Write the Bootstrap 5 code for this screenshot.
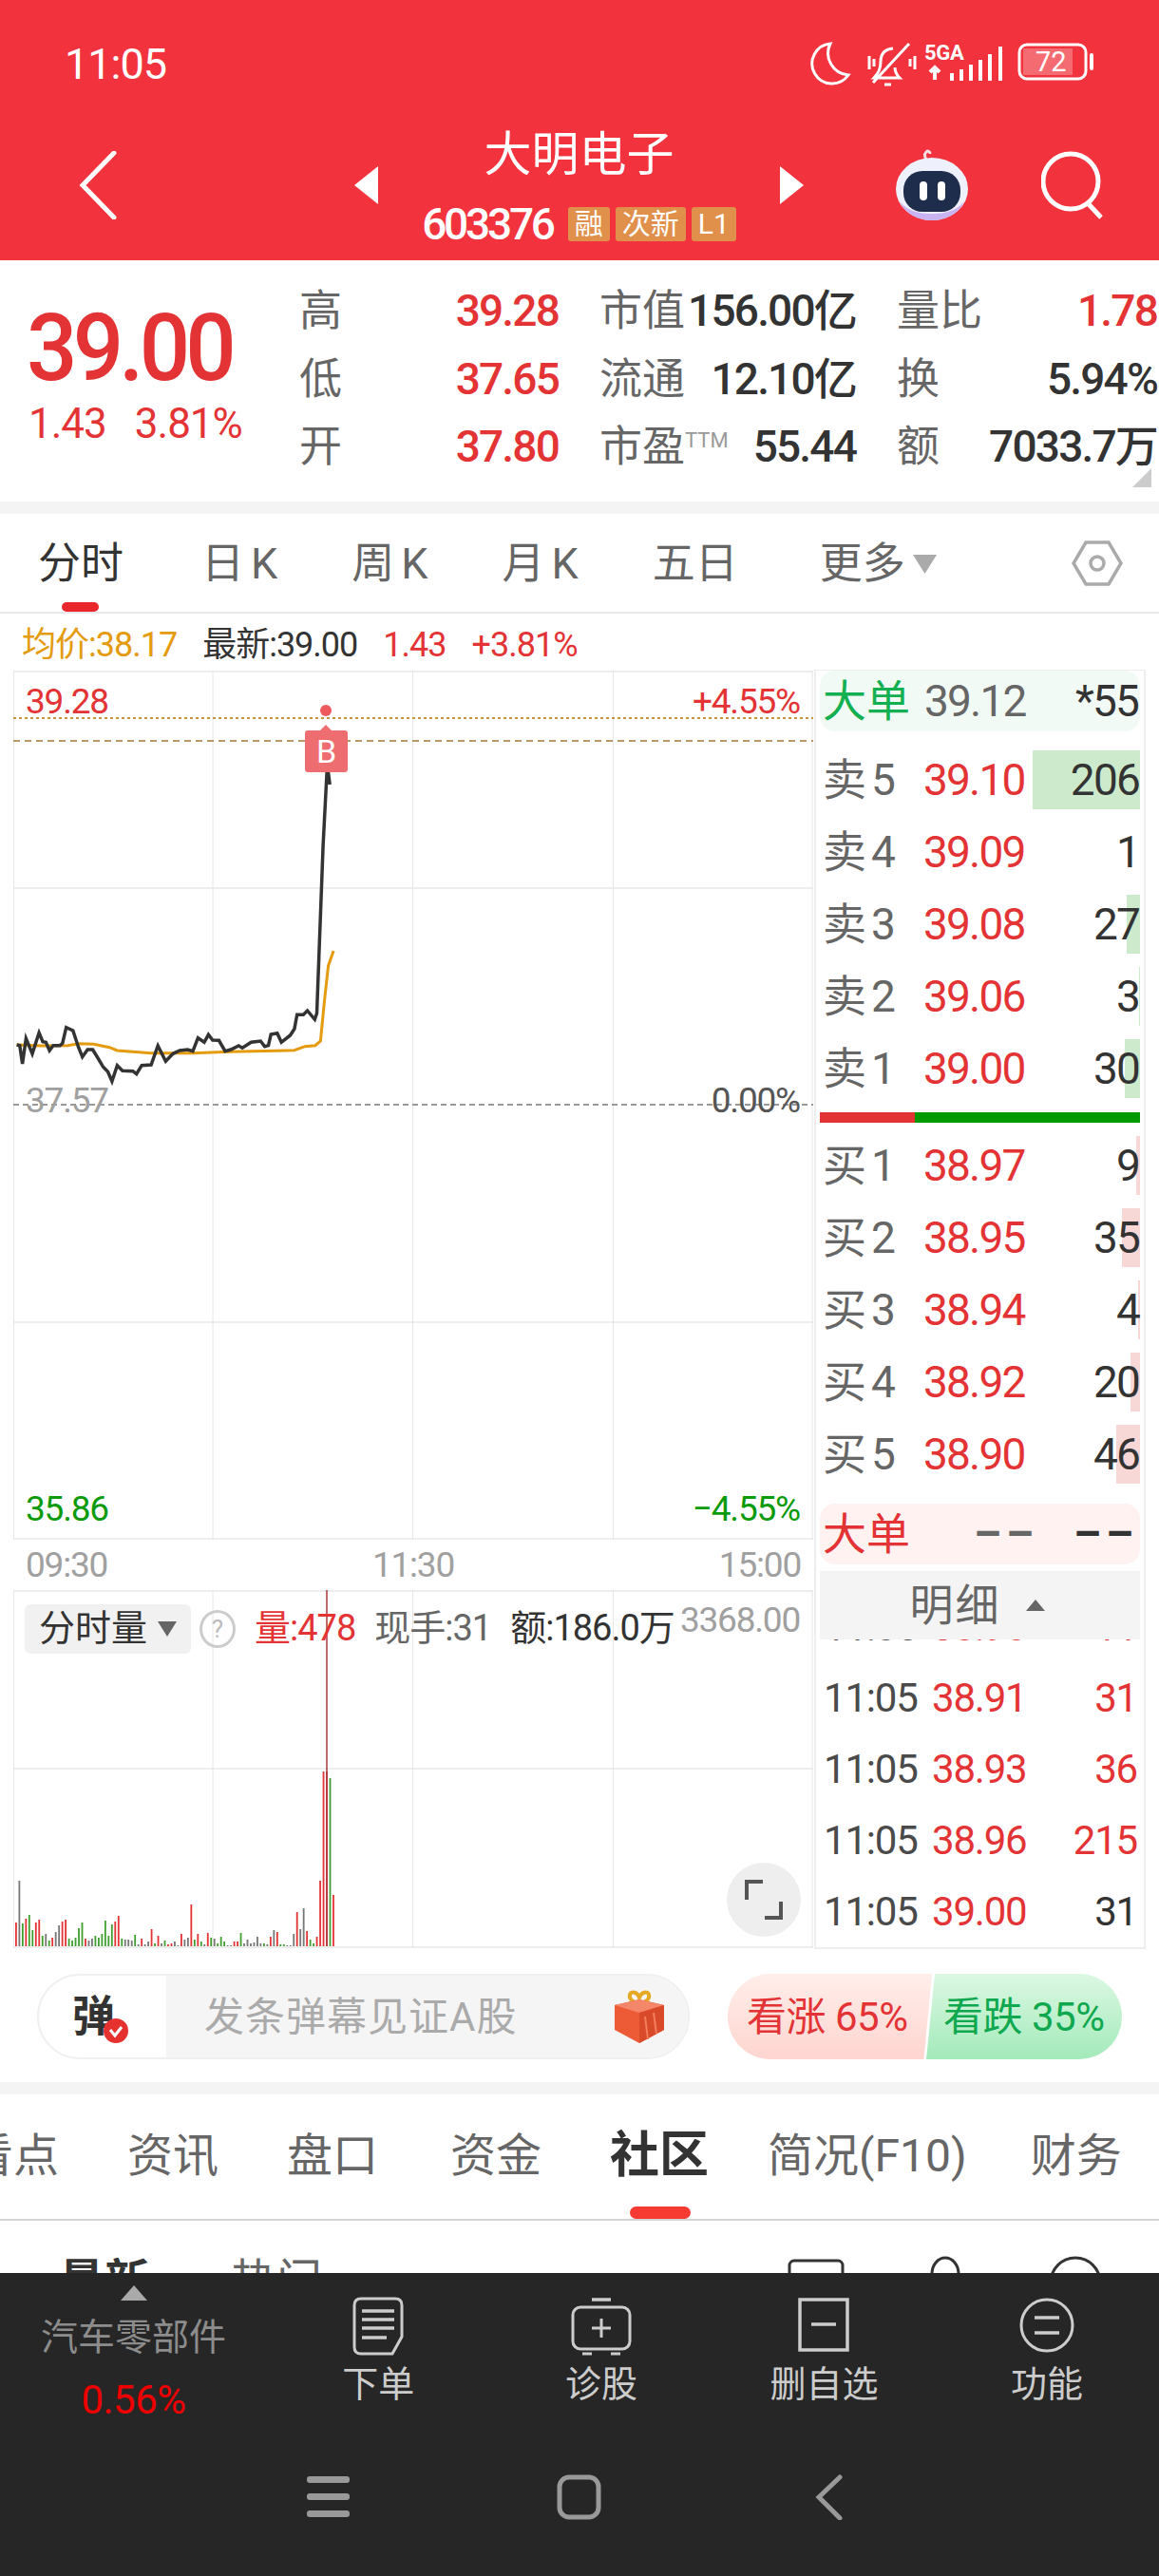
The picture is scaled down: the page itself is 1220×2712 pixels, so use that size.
<!DOCTYPE html>
<html lang="zh-CN">
<head>
    <meta charset="UTF-8">
    <meta name="viewport" content="width=device-width, initial-scale=1.0">
    <title>大明电子 603376</title>
    <link href="https://cdn.jsdelivr.net/npm/bootstrap@5.3.0/dist/css/bootstrap.min.css" rel="stylesheet">
    <style>
        body { margin: 0; background: #fff; font-family: Roboto, "Noto Sans CJK SC", sans-serif; color: #333; }
        .screen { width: 1220px; height: 2712px; overflow: hidden; }
        .up { color: #e33335; }
        .down { color: #0a9a0a; }
        .muted-txt { color: #666; }
        .grey-gap { height: 13px; background: #f4f4f4; }

        /* header */
        .top-red { height: 274px; background: #f2323c; color: #fff; }
        .status-line { height: 130px; padding: 6px 68px 0 68px; }
        .clock { font-size: 45px; letter-spacing: -1px; }
        .nav-line { height: 140px; padding-bottom: 10px; }
        .back-slot { width: 373px; padding-left: 83px; }
        .stock-head { width: 423px; text-align: center; padding-bottom: 9px; }
        .stock-name { font-size: 50px; line-height: 60px; font-family: "Noto Sans CJK SC", sans-serif; }
        .stock-code { font-size: 46px; line-height: 36px; margin-top: 30px; letter-spacing: -3.2px; font-weight: 500; }
        .tag-group { gap: 6px; margin-left: 16px; }
        .tagchip { background: #e0904a; border-radius: 3px; font-size: 30px; font-weight: 400; line-height: 36px; height: 36px; padding: 0 7px; letter-spacing: 0; }

        /* quote block */
        .quote-box { height: 254px; }
        .price-col { width: 315px; padding: 49px 0 0 28px; }
        .big-price { font-size: 98px; line-height: 88px; font-weight: 500; letter-spacing: -5px; width: 240px; transform: scaleX(.96); transform-origin: left center; }
        .price-diff { font-size: 44px; line-height: 50px; margin-top: 10px; margin-left: 2px; letter-spacing: -1px; gap: 30px; }
        .stat-grid { padding-top: 18px; display: grid; grid-template-columns: 273px 270px 274px; column-gap: 43px; grid-auto-rows: 71.5px; width: 905px; }
        .stat-cell { display: flex; justify-content: space-between; align-items: center; font-size: 46px; letter-spacing: -1.8px; font-weight: 500; white-space: nowrap; }
        .stat-cell > span:first-child { color: #666; font-weight: 400; letter-spacing: 0; font-size: 45px; }
        .stat-cell sup { font-size: 22px; color: #999; top: -.7em; letter-spacing: 0; }
        .corner-mark { right: 8px; bottom: 15px; width: 20px; height: 20px; background: #ccc; clip-path: polygon(100% 0, 100% 100%, 0 100%); }

        /* period tabs */
        .period-tabs { height: 105px; padding: 2px 0 0 40px; border-bottom: 2px solid #e8e8e8; font-size: 45px; color: #666; gap: 78px; }
        .period-tabs .on { color: #333; }
        .period-bar { left: 65px; bottom: 0; width: 39px; height: 10px; background: #e9262c; border-radius: 5px; }
        .k-letter { margin-left: 7px; }
        .hex-slot { right: 38px; top: 27px; }
        .tick-line { height: 59px; padding: 6px 0 0 23px; font-size: 36px; letter-spacing: -1px; gap: 27px; }
        .avg-txt { color: #e49b0f; }

        /* chart + order book */
        .market { height: 1347px; }
        .left-col { width: 857px; padding-left: 14px; }
        .price-chart { width: 842px; height: 915px; margin-top: 1px; }
        .vol-chart { width: 842px; height: 377px; }
        .chart-label { font-size: 37px; line-height: 40px; letter-spacing: -1.2px; white-space: nowrap; }
        .time-axis { height: 53px; padding: 0 14px 0 13px; font-size: 37px; color: #a0a0a0; letter-spacing: -1.2px; }
        .b-tag { left: 307px; top: 63px; width: 45px; height: 44px; background: #ee6d70; border-radius: 3px; color: #fff; font-size: 34px; line-height: 44px; text-align: center; letter-spacing: 0; }
        .b-tag::before { content: ""; position: absolute; left: 15px; top: -6px; width: 14px; height: 7px; background: #ee6d70; clip-path: polygon(50% 0, 100% 100%, 0 100%); }
        .vol-head { left: 12px; top: 12px; font-size: 38px; letter-spacing: -1px; white-space: nowrap; gap: 20px; }
        .vol-chip { width: 175px; height: 52px; background: #f1f1f1; border-radius: 6px; padding-left: 15px; letter-spacing: 0; font-size: 38px; margin-right: -11px; }
        .tri-down { width: 0; height: 0; border-left: 10px solid transparent; border-right: 10px solid transparent; border-top: 16px solid #666; margin-left: 11px; }
        .help-ring { width: 38px; height: 40px; border: 3px solid #ccc; border-radius: 50%; color: #bbb; font-size: 26px; line-height: 34px; text-align: center; letter-spacing: 0; }
        .expand-btn { right: 13px; bottom: 12px; width: 78px; height: 78px; background: #eee; border-radius: 50%; }

        .book { width: 349px; margin-right: 14px; border: 2px solid #eee; border-top-width: 1px; padding: 0 4px; height: 1347px; font-size: 46px; letter-spacing: -1.8px; }
        .big-order { height: 64px; border-radius: 16px; padding: 0 2px 0 3px; }
        .big-order.buy-side { background: #f2faf5; margin-bottom: 13px; }
        .big-order.sell-side { background: #fff2f1; margin-top: 14px; }
        .big-name { width: 107px; font-size: 46px; letter-spacing: 0; }
        .depth-row { height: 76px; padding: 0 1px 0 3px; }
        .depth-name { width: 106px; color: #666; letter-spacing: 0; }
        .depth-name small { font-size: 46px; margin-left: 5px; }
        .depth-bar { right: 0; top: 7px; height: 62px; }
        .split-bar { height: 11px; margin: 8px 0 7px; background: #009a00; }
        .split-bar div { width: 100px; height: 100%; background: #e33335; }
        .dash-pair { letter-spacing: 5px; font-weight: 700; }
        .detail-head { height: 72px; margin-top: 7px; background: #f4f4f4; color: #666; gap: 26px; padding-right: 6px; letter-spacing: 2px; }
        .tri-up { width: 0; height: 0; border-left: 10px solid transparent; border-right: 10px solid transparent; border-bottom: 12px solid #666; }
        .trade-box { height: 325px; overflow: hidden; }
        .trade-list { margin-top: -51px; }
        .trade-row { height: 75px; padding: 0 3px 0 4px; font-size: 42px; letter-spacing: -1.2px; }
        .trade-time { width: 114px; color: #4a4a4a; }

        /* danmu */
        .danmu-row { height: 140px; padding: 26px 39px 0 39px; gap: 40px; }
        .danmu-pill { width: 687px; height: 90px; border: 2px solid #f0f0f0; border-radius: 45px; overflow: hidden; }
        .danmu-left { width: 134px; padding-left: 35px; font-size: 45px; font-weight: 700; line-height: 1; color: #333; }
        .danmu-input { background: #f5f5f5; color: #aaa; font-size: 42px; letter-spacing: 1px; padding: 0 24px 0 40px; }
        .vote-up, .vote-down { height: 90px; width: 215px; font-size: 42px; letter-spacing: -.5px; white-space: nowrap; }
        .vote-up { background: linear-gradient(#ffeeea, #ffd5d0); border-radius: 45px 0 0 45px; clip-path: polygon(0 0, 100% 0, 96% 100%, 0 100%); padding-left: 20px; }
        .vote-down { background: linear-gradient(#dcf8e3, #a3eaba); border-radius: 0 45px 45px 0; margin-left: -15px; color: #0fa84f; clip-path: polygon(8.4% 0, 100% 0, 100% 100%, 4.2% 100%); padding-left: 27px; }

        /* lower tabs */
        .lower-tabs { height: 131px; padding: 0 0 2px 0; margin-left: -34px; width: 1270px; font-size: 48px; color: #666; gap: 72px; white-space: nowrap; }
        .lower-tabs .on { color: #333; font-size: 52px; font-weight: 700; position: relative; margin-right: -10px; }
        .lower-tabs .on::after { content: ""; position: absolute; left: 21px; right: 19px; bottom: -27px; height: 13px; background: #f73a32; border-radius: 7px; }
        .lower-tabs .tight-next { margin-right: -5px; }
        .lower-line { height: 2px; background: #d6d6d6; }
        .feed-head { height: 55px; overflow: hidden; font-size: 48px; line-height: 48px; padding: 40px 0 0 62px; color: #666; }
        .feed-head b { color: #333; margin-right: 85px; }
        .feed-icons { left: 825px; top: 0; }

        /* dark footer */
        .dark-foot { height: 319px; background: #262626; }
        .tool-line { height: 200px; }
        .sector-col { width: 281px; padding-top: 13px; font-size: 39px; color: #8c8c8c; line-height: 1; }
        .tri-sector { width: 0; height: 0; margin: 0 auto; border-left: 14px solid transparent; border-right: 14px solid transparent; border-bottom: 16px solid #aaa; }
        .sector-name { margin-top: 20px; }
        .sector-pct { margin-top: 25px; color: #e00; font-size: 42px; letter-spacing: -.5px; }
        .tool-item { width: 234.6px; padding-top: 25px; color: #ccc; font-size: 38px; line-height: 1; }
        .tool-item svg { display: block; margin: 0 auto 11px; height: 62px; }
        .sys-nav { padding-top: 12px; }
    </style>
</head>
<body>
<div class="screen position-relative">

    <!-- шапка -->
    <header class="top-red">
        <div class="status-line d-flex justify-content-between align-items-center">
            <span class="clock">11:05</span>
            <svg width="300" height="50" viewBox="0 0 300 50" fill="none" stroke="#fff" stroke-width="3">
                <path d="M22 3A21 21 0 1 0 41 36A23 23 0 0 1 22 3Z"/>
                <path d="M88 8c-10 1-13 7-13 14c0 9-4 14-7 17h27c-3-3-5-6-5-11M67 44L105 3M79 46h7M63 16v14M111 16v14M106 19v8M68 19v8"/>
                <text x="121" y="20" fill="#fff" stroke="none" font-family="Roboto" font-weight="700" font-size="22" letter-spacing="-.3">5GA</text>
                <path d="M132 30v11M137 33l-5-5-5 5M150 42v-8M160 42v-12M170 42v-17M180 42v-22M190 42v-28M201 42v-36" stroke-width="4"/>
                <rect x="221" y="4" width="70" height="36" rx="8"/>
                <path d="M225 8h52v28h-52z" fill="#fff" fill-opacity=".28" stroke="none"/>
                <text x="238" y="32" fill="#fff" stroke="none" font-family="Roboto" font-size="29">72</text>
                <path d="M297 15v14" stroke-width="4" stroke-linecap="round"/>
            </svg>
        </div>
        <div class="nav-line d-flex align-items-center">
            <div class="back-slot">
                <svg class="d-block" width="40" height="72" viewBox="0 0 40 72" fill="none" stroke="#fff" stroke-width="5"><path d="M37 2L4 36L37 70" stroke-linecap="round"/></svg>
            </div>
            <svg width="25" height="40" viewBox="0 0 25 40" fill="#fff"><path d="M25 0V40L0 20Z"/></svg>
            <div class="stock-head">
                <div class="stock-name">大明电子</div>
                <div class="stock-code d-flex justify-content-center align-items-center">
                    <span>603376</span>
                    <span class="tag-group d-flex">
                        <span class="tagchip">融</span><span class="tagchip">次新</span><span class="tagchip">L1</span>
                    </span>
                </div>
            </div>
            <svg width="25" height="40" viewBox="0 0 25 40" fill="#fff"><path d="M0 0V40L25 20Z"/></svg>
            <svg class="ms-auto" width="78" height="78" viewBox="0 0 78 78">
                <path d="M34 14c-2-4-4-7-1-10c2-2 4 0 4 2" fill="none" stroke="#f6dfe2" stroke-width="3"/>
                <ellipse cx="39" cy="43" rx="38" ry="33" fill="#eef0fb"/>
                <path d="M5 56c6 14 20 20 34 20s28-6 34-20c-8 10-20 13-34 13s-26-3-34-13z" fill="#c9b3f0"/>
                <rect x="9" y="24" width="60" height="43" rx="20" fill="#1f2d4d"/>
                <rect x="26" y="35" width="8" height="20" rx="4" fill="#fff"/>
                <rect x="45" y="35" width="8" height="20" rx="4" fill="#fff"/>
            </svg>
            <svg style="margin:0 58px 0 76px" width="66" height="72" viewBox="0 0 66 72" fill="none" stroke="#fff" stroke-width="5"><ellipse cx="31" cy="32" rx="29" ry="29"/><path d="M50 56L63 70"/></svg>
        </div>
    </header>

    <!-- котировка -->
    <section class="quote-box d-flex position-relative">
        <div class="price-col up">
            <div class="big-price">39.00</div>
            <div class="price-diff d-flex"><span>1.43</span><span>3.81%</span></div>
        </div>
        <div class="stat-grid">
            <div class="stat-cell"><span>高</span><span class="up">39.28</span></div>
            <div class="stat-cell"><span>市值</span><span>156.00亿</span></div>
            <div class="stat-cell"><span>量比</span><span class="up">1.78</span></div>
            <div class="stat-cell"><span>低</span><span class="up">37.65</span></div>
            <div class="stat-cell"><span>流通</span><span>12.10亿</span></div>
            <div class="stat-cell"><span>换</span><span>5.94%</span></div>
            <div class="stat-cell"><span>开</span><span class="up">37.80</span></div>
            <div class="stat-cell"><span>市盈<sup>TTM</sup></span><span>55.44</span></div>
            <div class="stat-cell"><span>额</span><span>7033.7万</span></div>
        </div>
        <div class="corner-mark position-absolute"></div>
    </section>
    <div class="grey-gap"></div>

    <!-- периоды -->
    <nav class="period-tabs d-flex align-items-center position-relative">
        <span class="on">分时</span>
        <span class="ms-1">日<span class="k-letter">K</span></span>
        <span>周<span class="k-letter">K</span></span>
        <span>月<span class="k-letter">K</span></span>
        <span>五日</span>
        <span class="d-flex align-items-center ms-2">更多
            <svg class="ms-2" width="25" height="20" viewBox="0 0 25 20" fill="#aaa"><path d="M0 0H25L12.500 20Z"/></svg>
        </span>
        <svg class="hex-slot position-absolute" width="54" height="50" viewBox="0 0 54 50" fill="none" stroke="#aaa" stroke-width="3.5"><path d="M15 3H39L52 25L39 47H15L2 25Z"/><circle cx="27" cy="25" r="7"/></svg>
        <div class="period-bar position-absolute"></div>
    </nav>
    <div class="tick-line d-flex align-items-center">
        <span class="avg-txt">均价:38.17</span>
        <span>最新:39.00</span>
        <span class="up">1.43</span>
        <span class="up">+3.81%</span>
    </div>

    <div class="market d-flex">
        <div class="left-col">
            <!-- график цены -->
            <div class="price-chart position-relative">
                <svg id="priceSvg" class="d-block" width="842" height="915" viewBox="0 0 842 915" fill="none">
                    <path d="M0 1H842M0 229H842M0 686H842M0 914H842" stroke="#eee" stroke-width="2"/>
                    <path d="M.5 0V915M210 0V915M420.5 0V915M631.500 0V915M841 0V915" stroke="#e6e6e6"/>
                    <path d="M0 50H842" stroke="#c9933f" stroke-width="2" stroke-dasharray="3 3"/>
                    <path d="M0 74H842" stroke="#b89a68" stroke-width="2" stroke-dasharray="7 5"/>
                    <path d="M0 457H842" stroke="#999" stroke-width="2" stroke-dasharray="6 4"/>
                    <circle cx="329" cy="42" r="6" fill="#ee5a5e"/>
                </svg>
                <div class="chart-label up position-absolute" style="left:13px;top:13px">39.28</div>
                <div class="chart-label up position-absolute" style="right:14px;top:13px">+4.55%</div>
                <div class="chart-label position-absolute" style="left:13px;top:433px;color:#a0a0a0">37.57</div>
                <div class="chart-label position-absolute" style="right:14px;top:433px;color:#555">0.00%</div>
                <div class="chart-label down position-absolute" style="left:13px;top:863px">35.86</div>
                <div class="chart-label down position-absolute" style="right:14px;top:863px">−4.55%</div>
                <div class="b-tag position-absolute">B</div>
            </div>
            <div class="time-axis d-flex justify-content-between align-items-center"><span>09:30</span><span>11:30</span><span>15:00</span></div>

            <!-- объём -->
            <div class="vol-chart position-relative">
                <svg id="volSvg" class="d-block" width="842" height="377" viewBox="0 0 842 377" fill="none">
                    <path d="M0 1H842M0 188H842M0 376H842" stroke="#eee" stroke-width="2"/>
                    <path d="M.5 0V377M210 0V377M420.5 0V377M631.500 0V377M841 0V377" stroke="#e6e6e6"/>
                </svg>
                <div class="vol-head position-absolute d-flex align-items-center">
                    <div class="vol-chip d-flex align-items-center">分时量<span class="tri-down"></span></div>
                    <div class="help-ring">?</div>
                    <span class="up">量:478</span>
                    <span class="muted-txt">现手:31</span>
                    <span>额:186.0万</span>
                </div>
                <div class="chart-label position-absolute" style="right:14px;top:12px;color:#a0a0a0">3368.00</div>
                <div class="expand-btn position-absolute d-flex align-items-center justify-content-center">
                    <svg width="42" height="44" viewBox="0 0 42 44" fill="none" stroke="#555" stroke-width="4"><path d="M20 3H3V22M22 41H39V24"/></svg>
                </div>
            </div>
        </div>

        <!-- стакан -->
        <aside class="book">
            <div class="big-order buy-side d-flex align-items-center">
                <span class="big-name" style="color:#12b050">大单</span>
                <span class="muted-txt">39.12</span>
                <span class="ms-auto">*55</span>
            </div>
            <div id="askRows"></div>
            <div class="split-bar"><div></div></div>
            <div id="bidRows"></div>
            <div class="big-order sell-side d-flex align-items-center">
                <span class="big-name up">大单</span>
                <span class="muted-txt dash-pair" style="margin-left:52px">––</span>
                <span class="ms-auto dash-pair">––</span>
            </div>
            <div class="detail-head d-flex align-items-center justify-content-center"><span>明细</span><span class="tri-up"></span></div>
            <div class="trade-box"><div id="tradeRows" class="trade-list"></div></div>
        </aside>
    </div>

    <!-- бегущие комментарии -->
    <div class="danmu-row d-flex">
        <div class="danmu-pill d-flex">
            <div class="danmu-left d-flex align-items-center position-relative">弹
                <svg class="position-absolute" style="left:67px;top:44px" width="28" height="28" viewBox="0 0 28 28"><circle cx="14" cy="14" r="13" fill="#e5322f"/><path d="M8 13l5 6l7-9" fill="none" stroke="#fff" stroke-width="3"/></svg>
            </div>
            <div class="danmu-input flex-grow-1 d-flex align-items-center justify-content-between">
                <span>发条弹幕见证A股</span>
                <svg width="54" height="56" viewBox="0 0 54 56">
                    <path d="M27 14c-8-1-11-5-10-9c1-4 8-3 10 3c2-6 9-7 10-3c1 4-2 8-10 9z" fill="none" stroke="#e5a923" stroke-width="4"/>
                    <path d="M1 16L27 10L53 16V42L27 56L1 42Z" fill="#ec5a36"/>
                    <path d="M1 16L27 10L53 16L27 24Z" fill="#f4866a"/>
                    <path d="M27 24V56L53 42V16Z" fill="#d94a2a"/>
                    <path d="M33 28l3 24M42 24l3 22" stroke="#f47d5c" stroke-width="2"/>
                </svg>
            </div>
        </div>
        <div class="d-flex">
            <div class="vote-up up d-flex align-items-center">看涨 65%</div>
            <div class="vote-down d-flex align-items-center">看跌 35%</div>
        </div>
    </div>
    <div class="grey-gap"></div>

    <!-- нижние вкладки -->
    <div class="overflow-hidden">
        <div class="lower-tabs d-flex align-items-center">
            <span>看点</span><span>资讯</span><span>盘口</span><span class="ms-1">资金</span><span class="on">社区</span><span class="tight-next">简况(F10)</span><span>财务</span>
        </div>
    </div>
    <div class="lower-line"></div>
    <div class="feed-head position-relative">
        <b>最新</b><span>热门</span>
        <svg class="feed-icons position-absolute" width="340" height="55" viewBox="0 0 340 55" fill="none" stroke="#333" stroke-width="3">
            <rect x="6" y="42" width="56" height="40" rx="5"/>
            <ellipse cx="170" cy="56" rx="14" ry="17"/>
            <circle cx="307" cy="65" r="26"/>
        </svg>
    </div>

    <!-- тёмный подвал -->
    <footer class="dark-foot">
        <div class="tool-line d-flex text-center">
            <div class="sector-col">
                <div class="tri-sector"></div>
                <div class="sector-name">汽车零部件</div>
                <div class="sector-pct">0.56%</div>
            </div>
            <div class="tool-item">
                <svg width="54" height="62" viewBox="0 0 54 62" fill="none" stroke="#ccc" stroke-width="3"><path d="M9 2H45Q52 2 52 9V42L42 60H9Q2 60 2 53V9Q2 2 9 2Z"/><path d="M10 15H44M10 24H44M10 33H44M10 43H36" stroke-width="3.500"/></svg>
                下单
            </div>
            <div class="tool-item">
                <svg width="64" height="62" viewBox="0 0 64 62" fill="none" stroke="#ccc" stroke-width="3"><path d="M22 3H42" stroke-width="3.500"/><rect x="2" y="11" width="60" height="44" rx="8"/><path d="M32 23V43M22 33H42M12 60H22M42 60H52"/></svg>
                诊股
            </div>
            <div class="tool-item">
                <svg width="54" height="62" viewBox="0 0 54 62" fill="none" stroke="#ccc" stroke-width="3.500"><rect x="2" y="3" width="50" height="53"/><path d="M14 29H40"/></svg>
                删自选
            </div>
            <div class="tool-item">
                <svg width="58" height="62" viewBox="0 0 58 62" fill="none" stroke="#ccc" stroke-width="3"><circle cx="29" cy="30" r="27"/><path d="M16 22H42M16 38H42" stroke-width="3.500"/></svg>
                功能
            </div>
        </div>
        <div class="sys-nav d-flex">
            <svg style="margin-left:323px" width="45" height="48" viewBox="0 0 45 48" fill="#999"><rect y="2" width="45" height="7" rx="3"/><rect y="20" width="45" height="7" rx="3"/><rect y="38" width="45" height="7" rx="3"/></svg>
            <svg style="margin-left:218px" width="47" height="48" viewBox="0 0 47 48" fill="none" stroke="#999" stroke-width="5"><rect x="3" y="3" width="41" height="42" rx="10"/></svg>
            <svg style="margin-left:224px" width="30" height="48" viewBox="0 0 30 48" fill="none" stroke="#999" stroke-width="5" stroke-linecap="round"><path d="M27 3L5 24L27 46"/></svg>
        </div>
    </footer>
</div>

<script src="https://cdn.jsdelivr.net/npm/bootstrap@5.3.0/dist/js/bootstrap.bundle.min.js"></script>
<script>
    // стакан
    const asks = [[5, '39.10', 206, 113], [4, '39.09', 1, 0], [3, '39.08', 27, 14], [2, '39.06', 3, 1.5], [1, '39.00', 30, 16]];
    const bids = [[1, '38.97', 9, 4], [2, '38.95', 35, 19], [3, '38.94', 4, 2], [4, '38.92', 20, 10], [5, '38.90', 46, 25]];
    function depthRow(name, r, color) {
        return `<div class="depth-row d-flex align-items-center position-relative">
            <div class="depth-bar position-absolute" style="width:${r[3]}px;background:${color}"></div>
            <span class="depth-name position-relative">${name}<small>${r[0]}</small></span>
            <span class="up position-relative">${r[1]}</span>
            <span class="ms-auto position-relative">${r[2]}</span></div>`;
    }
    document.getElementById('askRows').innerHTML = asks.map(r => depthRow('卖', r, '#cdeacd')).join('');
    document.getElementById('bidRows').innerHTML = bids.map(r => depthRow('买', r, '#f8d7d7')).join('');

    // сделки
    const trades = [['38.90', '11', 1], ['38.91', '31', 1], ['38.93', '36', 1], ['38.96', '215', 1], ['39.00', '31', 0]];
    document.getElementById('tradeRows').innerHTML = trades.map(t =>
        `<div class="trade-row d-flex align-items-center"><span class="trade-time">11:05</span><span class="up">${t[0]}</span><span class="ms-auto ${t[2] ? 'up' : ''}">${t[1]}</span></div>`
    ).join('');

    // линии графика, снято с кадра: x делим на 1.823, y на 3
    const NS = 'http://www.w3.org/2000/svg';
    const last = [32,1230,38,1232,43,1290,50,1210,62,1258,75,1192,82,1220,88,1222,95,1248,102,1232,115,1232,120,1225,127,1175,140,1185,150,1235,158,1268,168,1245,178,1245,188,1272,198,1300,207,1315,215,1345,225,1295,235,1312,255,1313,262,1322,272,1295,290,1293,303,1233,318,1282,332,1258,345,1248,360,1245,370,1250,380,1208,392,1222,400,1198,408,1215,420,1216,432,1250,443,1245,458,1233,465,1240,482,1222,500,1218,508,1235,515,1232,520,1197,532,1193,540,1222,557,1200,565,1180,570,1135,582,1135,590,1122,604,1150,608,1130,620,600,628,345,633,408];
    const avg = [32,1230,80,1233,130,1232,150,1226,180,1228,210,1238,225,1248,290,1256,370,1256,440,1252,530,1249,565,1247,585,1235,605,1232,615,1218,622,1100,630,980,640,933];
    function addLine(raw, color, width) {
        const pts = [];
        for (let i = 0; i < raw.length; i += 2) pts.push((raw[i] / 1.823 - 14).toFixed(1) + ',' + (raw[i + 1] / 3 - 16).toFixed(1));
        const el = document.createElementNS(NS, 'polyline');
        el.setAttribute('points', pts.join(' '));
        el.setAttribute('stroke', color);
        el.setAttribute('stroke-width', width);
        document.getElementById('priceSvg').appendChild(el);
    }
    addLine(avg, '#e49b0f', '3');
    addLine(last, '#333', '3.5');

    // столбики объёма: высота и цвет
    const vols = 'r25 k69 g24 r29 g33 g17 r25 r28 g11 k13 g6 r9 k15 k22 r26 r28 g8 g6 g9 g19 g25 r8 k6 k8 g11 g9 g13 g27 g11 g23 r26 r32 g8 k7 k7 k6 g12 k2 r8 k2 k5 r18 g3 r11 k3 g6 r2 r3 k5 k1 r13 k7 k9 r44 g7 r13 g5 k2 r14 g9 k8 g3 g10 g5 k1 k1 r5 r5 g14 k3 k7 k3 k4 k10 k3 g3 k2 r10 k17 r15 g2 g2 k1 k1 k13 r36 k18 k40 r16 g7 g3 r10 r69 r184 r184 g177 r54'.split(' ');
    const volColor = { r: '#e33335', g: '#3f9f2f', k: '#777' };
    const volSvg = document.getElementById('volSvg');
    vols.forEach((v, i) => {
        const bar = document.createElementNS(NS, 'rect');
        const h = +v.slice(1);
        bar.setAttribute('x', (2 + i * 3.48).toFixed(2));
        bar.setAttribute('y', 375 - h);
        bar.setAttribute('width', '1.8');
        bar.setAttribute('height', h);
        bar.setAttribute('fill', volColor[v[0]]);
        volSvg.appendChild(bar);
    });
    const cursor = document.createElementNS(NS, 'path');
    cursor.setAttribute('d', 'M330 0V375');
    cursor.setAttribute('stroke', '#a8383c');
    cursor.setAttribute('stroke-width', '1.500');
    volSvg.appendChild(cursor);
</script>
</body>
</html>
